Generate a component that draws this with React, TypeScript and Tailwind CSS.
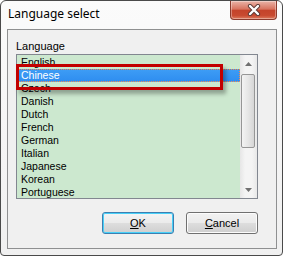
import React from "react";

const langs = [
  "English",
  "Chinese",
  "Czech",
  "Danish",
  "Dutch",
  "French",
  "German",
  "Italian",
  "Japanese",
  "Korean",
  "Portuguese",
];

function CloseGlyph() {
  return (
    <svg width="14" height="12" viewBox="0 0 14 12">
      <path d="M3 2 L11 10 M11 2 L3 10" stroke="#5a3a36" strokeWidth="4.2" strokeLinecap="round" fill="none" />
      <path d="M3 2 L11 10 M11 2 L3 10" stroke="#ffffff" strokeWidth="2.4" strokeLinecap="round" fill="none" />
    </svg>
  );
}

export default function App() {
  return (
    <div
      className="relative w-[283px] h-[256px] flex flex-col border border-[#4a4a4a] rounded-t-[6px] rounded-b-[4px] bg-[linear-gradient(#fbfbfb,#f0f0f0)] overflow-hidden"
      style={{ fontFamily: '"Liberation Sans", Arial, sans-serif' }}
    >
      <div className="h-[28px] flex items-start shrink-0">
        <div
          className="pl-[7px] pt-[5px] text-[12px] leading-[16px] text-black"
          style={{ fontFamily: '"Noto Sans", sans-serif' }}
        >
          Language select
        </div>
        <div className="ml-auto mr-[5px] w-[47px] h-[19px] flex items-center justify-center rounded-b-[4px] border border-t-0 border-[#8a3b2e] bg-[linear-gradient(#eab4a8,#d8735f_45%,#c4432b_52%,#c84a30_80%,#dc7a5e)] shadow-[inset_0_0_0_1px_rgba(255,255,255,0.35)]">
          <CloseGlyph />
        </div>
      </div>
      <div className="ml-[6px] mr-[5px] mb-[6px] flex-1 border border-[#8f9091] bg-[#f0f0f0] flex flex-col">
        <div className="mt-[10px] pl-[8px] text-[11px] leading-[13px] text-black">Language</div>
        <div className="mt-[1px] ml-[8px] w-[242px] h-[145px] border border-[#828790] bg-[#cce8cf] flex">
          <div className="flex-1 pt-[1px] overflow-hidden">
            {langs.map((l, i) =>
              i === 1 ? (
                <div
                  key={l}
                  className="h-[13px] leading-[11px] pl-[3px] text-[10.5px] text-white bg-[linear-gradient(#3d9cf5,#2f8ef0)] border border-dotted border-[#f08a50] whitespace-nowrap"
                >
                  {l}
                </div>
              ) : (
                <div key={l} className="h-[13px] leading-[13px] pl-[4px] text-[10.5px] text-black whitespace-nowrap">
                  {l}
                </div>
              )
            )}
          </div>
          <div className="w-[17px] h-full flex flex-col bg-[linear-gradient(90deg,#e6e6e6,#f4f4f4_30%,#f4f4f4_70%,#e8e8e8)]">
            <div className="h-[17px] flex items-center justify-center shrink-0">
              <svg width="7" height="4" viewBox="0 0 7 4">
                <path d="M0 4 L3.5 0 L7 4 Z" fill="#707070" />
              </svg>
            </div>
            <div className="mt-[2px] ml-[1px] w-[14px] h-[74px] rounded-[2px] border border-[#969696] bg-[linear-gradient(90deg,#f3f3f3,#e6e6e6_50%,#d6d6d6)] shrink-0" />
            <div className="flex-1" />
            <div className="h-[17px] flex items-center justify-center shrink-0">
              <svg width="7" height="4" viewBox="0 0 7 4">
                <path d="M0 0 L7 0 L3.5 4 Z" fill="#707070" />
              </svg>
            </div>
          </div>
        </div>
        <div className="mt-[13px] ml-[8px] w-[242px] flex justify-end gap-[12px]">
          <div className="w-[72px] h-[22px] rounded-[3px] border border-[#3c7fb1] shadow-[inset_0_0_0_1px_#48d0f8] bg-[linear-gradient(#f4f4f4,#ebebeb_48%,#dddddd_52%,#cfcfcf)] flex items-center justify-center text-[11px] text-black">
            <span className="underline underline-offset-[1px]">O</span>K
          </div>
          <div className="w-[72px] h-[22px] rounded-[3px] border border-[#707070] shadow-[inset_0_0_0_1px_#fcfcfc] bg-[linear-gradient(#f2f2f2,#ebebeb_48%,#dddddd_52%,#cfcfcf)] flex items-center justify-center text-[11px] text-black">
            <span className="underline underline-offset-[1px]">C</span>ancel
          </div>
        </div>
      </div>
      <div className="absolute left-[15px] top-[63px] w-[207px] h-[26px] border-[3px] border-[#c20000] shadow-[3px_4px_4px_rgba(0,0,0,0.3)]" />
    </div>
  );
}
